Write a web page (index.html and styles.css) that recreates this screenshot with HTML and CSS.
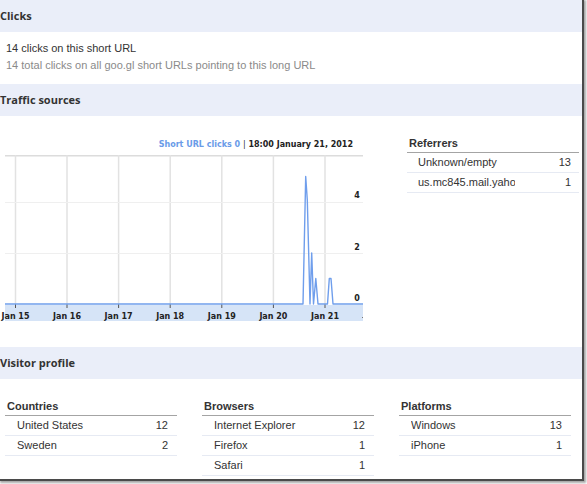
FILE: index.html
```html
<!DOCTYPE html>
<html>
<head>
<meta charset="utf-8">
<link rel="stylesheet" href="styles.css">
</head>
<body>
<div class="frame">
  <div class="band">Clicks</div>
  <div class="clicks">
    <div class="primary">14 clicks on this short URL</div>
    <div class="secondary">14 total clicks on all goo.gl short URLs pointing to this long URL</div>
  </div>
  <div class="band">Traffic sources</div>
  <div class="traffic">
    <div class="chart">
      <div class="chart-title"><span class="series">Short URL clicks 0</span> <span class="sep">|</span> 18:00 January 21, 2012</div>
      <svg class="plot" width="363" height="167" viewBox="0 0 363 167">
        <line x1="5" y1="0.75" x2="363" y2="0.75" stroke="#dcdcdc" stroke-width="1.5"/>
        <g stroke="#e2e2e2" stroke-width="1.5">
          <line x1="15.5" y1="0" x2="15.5" y2="149"/>
          <line x1="67" y1="0" x2="67" y2="149"/>
          <line x1="118.6" y1="0" x2="118.6" y2="149"/>
          <line x1="170.2" y1="0" x2="170.2" y2="149"/>
          <line x1="221.8" y1="0" x2="221.8" y2="149"/>
          <line x1="273.4" y1="0" x2="273.4" y2="149"/>
          <line x1="325" y1="0" x2="325" y2="149"/>
        </g>
        <g stroke="#efefef" stroke-width="1">
          <line x1="5" y1="47.5" x2="363" y2="47.5"/>
          <line x1="5" y1="98.5" x2="363" y2="98.5"/>
        </g>
        <rect x="5" y="150" width="358" height="16" fill="#d6e4f7"/>
        <g stroke="#555" stroke-width="1">
          <line x1="15.5" y1="149" x2="15.5" y2="153"/>
          <line x1="67" y1="149" x2="67" y2="153"/>
          <line x1="118.6" y1="149" x2="118.6" y2="153"/>
          <line x1="170.2" y1="149" x2="170.2" y2="153"/>
          <line x1="221.8" y1="149" x2="221.8" y2="153"/>
          <line x1="273.4" y1="149" x2="273.4" y2="153"/>
          <line x1="325" y1="149" x2="325" y2="153"/>
        </g>
        <polyline fill="none" stroke="#6f9eec" stroke-width="1.4" stroke-linejoin="round"
          points="5,149 303,149 305.7,21.5 307.3,45 310,149 311.7,98 313.5,149 315.8,123.5 318,149 327.5,149 329.3,123.5 331,123.5 333,149 363,149"/>
        <g class="axis-label" text-anchor="middle">
          <text x="15.5" y="163.5">Jan 15</text>
          <text x="67" y="163.5">Jan 16</text>
          <text x="118.6" y="163.5">Jan 17</text>
          <text x="170.2" y="163.5">Jan 18</text>
          <text x="221.8" y="163.5">Jan 19</text>
          <text x="273.4" y="163.5">Jan 20</text>
          <text x="325" y="163.5">Jan 21</text>
          <text x="357" y="43">4</text>
          <text x="357" y="94.7">2</text>
          <text x="357" y="145.7">0</text>
        </g>
        <rect x="362" y="162" width="1" height="1" fill="#777"/>
      </svg>
    </div>
    <div class="table referrers">
      <div class="thead">Referrers</div>
      <div class="row"><span class="name">Unknown/empty</span><span class="num">13</span></div>
      <div class="row"><span class="name">us.mc845.mail.yahoo.com</span><span class="num">1</span></div>
    </div>
  </div>
  <div class="band">Visitor profile</div>
  <div class="profile">
    <div class="table">
      <div class="thead">Countries</div>
      <div class="row"><span class="name">United States</span><span class="num">12</span></div>
      <div class="row"><span class="name">Sweden</span><span class="num">2</span></div>
    </div>
    <div class="table">
      <div class="thead">Browsers</div>
      <div class="row"><span class="name">Internet Explorer</span><span class="num">12</span></div>
      <div class="row"><span class="name">Firefox</span><span class="num">1</span></div>
      <div class="row"><span class="name">Safari</span><span class="num">1</span></div>
    </div>
    <div class="table">
      <div class="thead">Platforms</div>
      <div class="row"><span class="name">Windows</span><span class="num">13</span></div>
      <div class="row"><span class="name">iPhone</span><span class="num">1</span></div>
    </div>
  </div>
</div>
</body>
</html>
```
FILE: styles.css
```css
html, body {
  margin: 0;
  padding: 0;
  background: #ffffff;
}
body {
  width: 587px;
  height: 484px;
  overflow: hidden;
  font-family: "Liberation Sans", Arial, sans-serif;
}
.frame {
  width: 582px;
  height: 479px;
  overflow: hidden;
  background: #ffffff;
  border-right: 2px solid #4a4a4a;
  border-bottom: 2px solid #4a4a4a;
  box-shadow: 1px 1px 2px 1px rgba(0, 0, 0, 0.35);
}
.band {
  height: 32px;
  line-height: 32px;
  background: #eaeef9;
  font-family: "Open Sans", sans-serif;
  font-weight: bold;
  font-size: 11px;
  color: #333;
}
.clicks {
  padding: 8px 0 10px 6px;
  font-size: 11px;
  line-height: 17px;
}
.primary { color: #333; }
.secondary { color: #8a8a8a; }
.traffic {
  display: flex;
  align-items: flex-start;
  padding: 19px 0 25px 0;
}
.chart {
  width: 363px;
}
.chart-title {
  height: 20px;
  line-height: 20px;
  text-align: right;
  padding-right: 10px;
  font-family: "DejaVu Sans", Verdana, sans-serif;
  font-weight: bold;
  font-size: 8px;
  color: #222;
}
.series { color: #6a9be8; }
.sep { color: #333; font-weight: normal; }
.plot {
  display: block;
  overflow: visible;
}
.axis-label {
  font-family: "DejaVu Sans", Verdana, sans-serif;
  font-weight: bold;
  font-size: 8px;
  fill: #222;
}
.referrers {
  margin-left: 44px;
}
.table {
  width: 172px;
  font-size: 11px;
  color: #333;
}
.thead {
  font-weight: bold;
  line-height: 17px;
  padding-left: 2px;
  border-bottom: 1px solid #a4a4a4;
}
.row {
  display: flex;
  height: 19px;
  line-height: 19px;
  padding: 0 9px 0 12px;
  border-bottom: 1px solid #e6eaf3;
  white-space: nowrap;
}
.name {
  flex: 1;
  overflow: hidden;
}
.num {
  text-align: right;
}
.referrers .row {
  padding-left: 11px;
  padding-right: 8px;
}
.referrers .name {
  flex: 0 0 97px;
}
.referrers .num {
  flex: 1;
}
.profile {
  display: flex;
  gap: 25px;
  padding: 19px 0 0 5px;
}
```
